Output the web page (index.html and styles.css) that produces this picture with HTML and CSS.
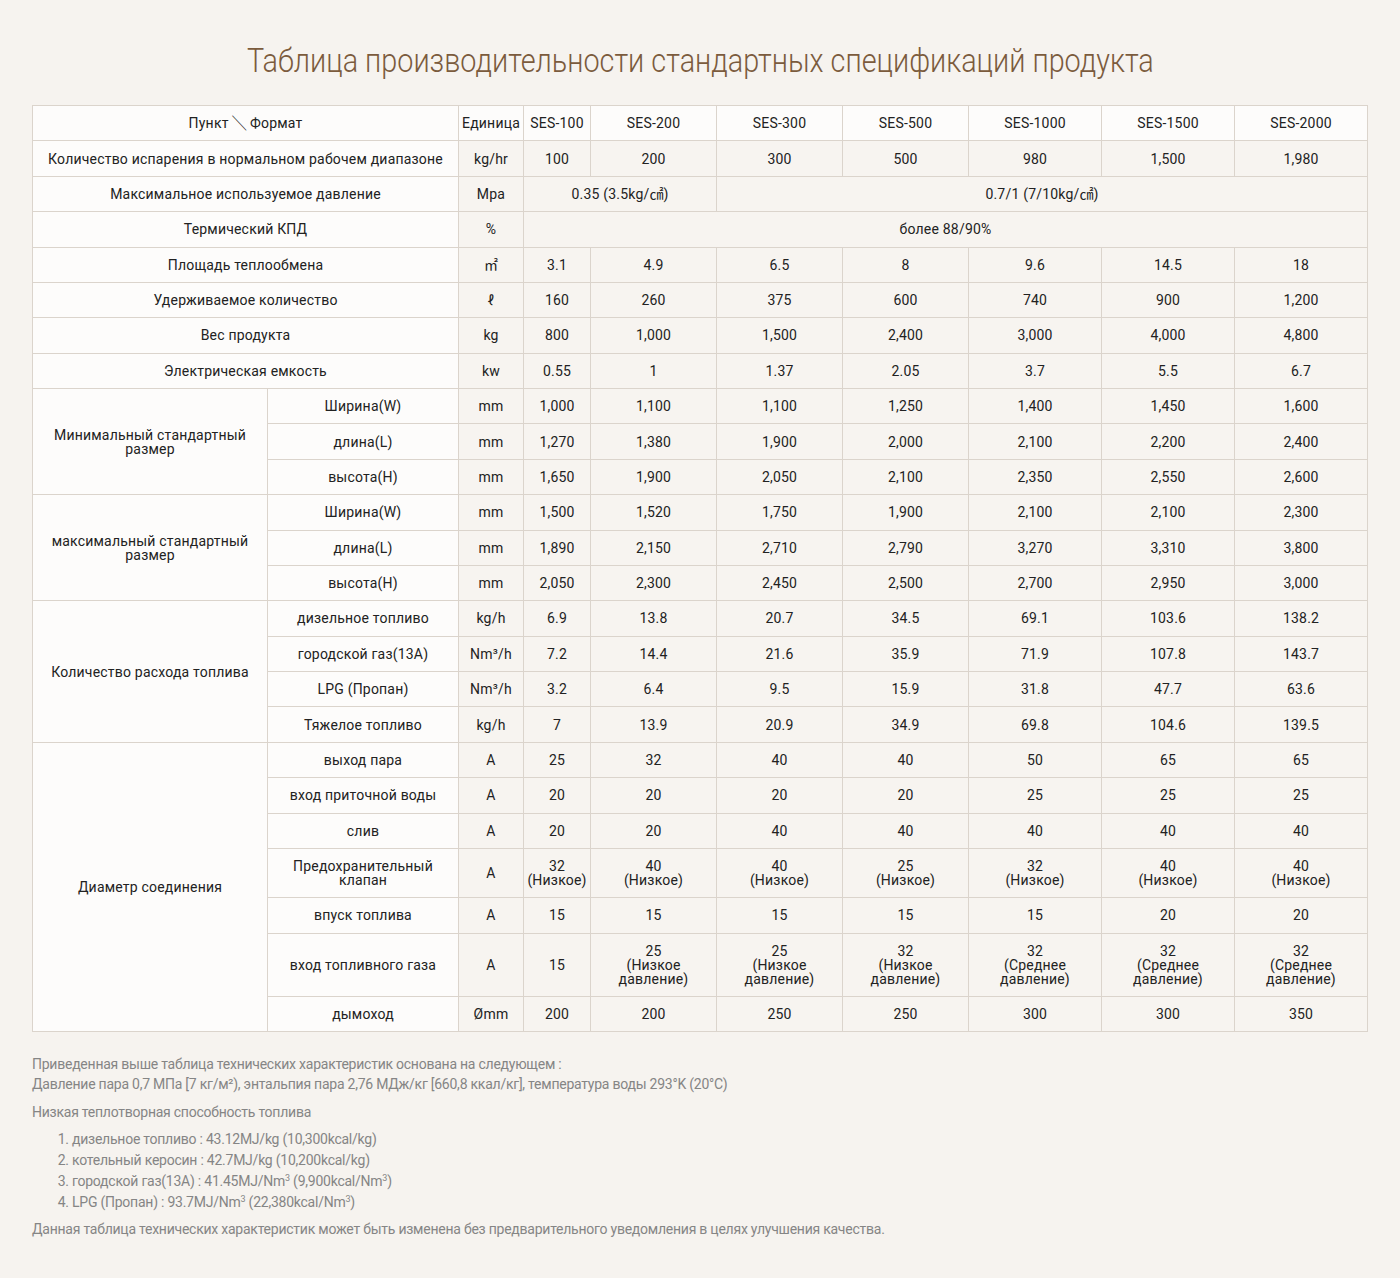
FILE: index.html
```html
<!DOCTYPE html>
<html lang="ru">
<head>
<meta charset="utf-8">
<title>Таблица производительности</title>
<link rel="stylesheet" href="styles.css">
</head>
<body>
<div class="page">
  <h1 class="title"><span class="title-text">Таблица производительности стандартных спецификаций продукта</span></h1>
  <table class="spec">
    <colgroup>
      <col class="c-grp"><col class="c-sub"><col class="c-unit"><col class="c-s1">
      <col class="c-m"><col class="c-m"><col class="c-m"><col class="c-l"><col class="c-l"><col class="c-l">
    </colgroup>
    <thead>
      <tr class="head">
        <th colspan="2">Пункт <span class="sym">╲</span> Формат</th><th>Единица</th><th>SES-100</th><th>SES-200</th><th>SES-300</th><th>SES-500</th><th>SES-1000</th><th>SES-1500</th><th>SES-2000</th>
      </tr>
    </thead>
    <tbody>
      <tr><td class="lbl" colspan="2">Количество испарения в нормальном рабочем диапазоне</td><td>kg/hr</td><td>100</td><td>200</td><td>300</td><td>500</td><td>980</td><td>1,500</td><td>1,980</td></tr>
      <tr><td class="lbl" colspan="2">Максимальное используемое давление</td><td>Mpa</td><td colspan="2">0.35 (3.5kg/<span class="sym">㎠</span>)</td><td colspan="5">0.7/1 (7/10kg/<span class="sym">㎠</span>)</td></tr>
      <tr><td class="lbl" colspan="2">Термический КПД</td><td>%</td><td colspan="7">более 88/90%</td></tr>
      <tr><td class="lbl" colspan="2">Площадь теплообмена</td><td><span class="sym">㎡</span></td><td>3.1</td><td>4.9</td><td>6.5</td><td>8</td><td>9.6</td><td>14.5</td><td>18</td></tr>
      <tr><td class="lbl" colspan="2">Удерживаемое количество</td><td>ℓ</td><td>160</td><td>260</td><td>375</td><td>600</td><td>740</td><td>900</td><td>1,200</td></tr>
      <tr><td class="lbl" colspan="2">Вес продукта</td><td>kg</td><td>800</td><td>1,000</td><td>1,500</td><td>2,400</td><td>3,000</td><td>4,000</td><td>4,800</td></tr>
      <tr><td class="lbl" colspan="2">Электрическая емкость</td><td>kw</td><td>0.55</td><td>1</td><td>1.37</td><td>2.05</td><td>3.7</td><td>5.5</td><td>6.7</td></tr>

      <tr><td class="lbl" rowspan="3">Минимальный стандартный<br>размер</td><td class="lbl">Ширина(W)</td><td>mm</td><td>1,000</td><td>1,100</td><td>1,100</td><td>1,250</td><td>1,400</td><td>1,450</td><td>1,600</td></tr>
      <tr><td class="lbl">длина(L)</td><td>mm</td><td>1,270</td><td>1,380</td><td>1,900</td><td>2,000</td><td>2,100</td><td>2,200</td><td>2,400</td></tr>
      <tr><td class="lbl">высота(H)</td><td>mm</td><td>1,650</td><td>1,900</td><td>2,050</td><td>2,100</td><td>2,350</td><td>2,550</td><td>2,600</td></tr>

      <tr><td class="lbl" rowspan="3">максимальный стандартный<br>размер</td><td class="lbl">Ширина(W)</td><td>mm</td><td>1,500</td><td>1,520</td><td>1,750</td><td>1,900</td><td>2,100</td><td>2,100</td><td>2,300</td></tr>
      <tr><td class="lbl">длина(L)</td><td>mm</td><td>1,890</td><td>2,150</td><td>2,710</td><td>2,790</td><td>3,270</td><td>3,310</td><td>3,800</td></tr>
      <tr><td class="lbl">высота(H)</td><td>mm</td><td>2,050</td><td>2,300</td><td>2,450</td><td>2,500</td><td>2,700</td><td>2,950</td><td>3,000</td></tr>

      <tr><td class="lbl" rowspan="4">Количество расхода топлива</td><td class="lbl">дизельное топливо</td><td>kg/h</td><td>6.9</td><td>13.8</td><td>20.7</td><td>34.5</td><td>69.1</td><td>103.6</td><td>138.2</td></tr>
      <tr><td class="lbl">городской газ(13A)</td><td>Nm³/h</td><td>7.2</td><td>14.4</td><td>21.6</td><td>35.9</td><td>71.9</td><td>107.8</td><td>143.7</td></tr>
      <tr><td class="lbl">LPG (Пропан)</td><td>Nm³/h</td><td>3.2</td><td>6.4</td><td>9.5</td><td>15.9</td><td>31.8</td><td>47.7</td><td>63.6</td></tr>
      <tr><td class="lbl">Тяжелое топливо</td><td>kg/h</td><td>7</td><td>13.9</td><td>20.9</td><td>34.9</td><td>69.8</td><td>104.6</td><td>139.5</td></tr>

      <tr><td class="lbl" rowspan="7">Диаметр соединения</td><td class="lbl">выход пара</td><td>A</td><td>25</td><td>32</td><td>40</td><td>40</td><td>50</td><td>65</td><td>65</td></tr>
      <tr><td class="lbl">вход приточной воды</td><td>A</td><td>20</td><td>20</td><td>20</td><td>20</td><td>25</td><td>25</td><td>25</td></tr>
      <tr><td class="lbl">слив</td><td>A</td><td>20</td><td>20</td><td>40</td><td>40</td><td>40</td><td>40</td><td>40</td></tr>
      <tr><td class="lbl">Предохранительный<br>клапан</td><td>A</td><td>32<br>(Низкое)</td><td>40<br>(Низкое)</td><td>40<br>(Низкое)</td><td>25<br>(Низкое)</td><td>32<br>(Низкое)</td><td>40<br>(Низкое)</td><td>40<br>(Низкое)</td></tr>
      <tr><td class="lbl">впуск топлива</td><td>A</td><td>15</td><td>15</td><td>15</td><td>15</td><td>15</td><td>20</td><td>20</td></tr>
      <tr><td class="lbl">вход топливного газа</td><td>A</td><td>15</td><td>25<br>(Низкое<br>давление)</td><td>25<br>(Низкое<br>давление)</td><td>32<br>(Низкое<br>давление)</td><td>32<br>(Среднее<br>давление)</td><td>32<br>(Среднее<br>давление)</td><td>32<br>(Среднее<br>давление)</td></tr>
      <tr><td class="lbl">дымоход</td><td>Ømm</td><td>200</td><td>200</td><td>250</td><td>250</td><td>300</td><td>300</td><td>350</td></tr>
    </tbody>
  </table>

  <div class="notes">
    <p>Приведенная выше таблица технических характеристик основана на следующем :<br>Давление пара 0,7 МПа [7 кг/м²), энтальпия пара 2,76 МДж/кг [660,8 ккал/кг], температура воды 293°K (20°C)</p>
    <p>Низкая теплотворная способность топлива</p>
    <ol>
      <li>дизельное топливо : 43.12MJ/kg (10,300kcal/kg)</li>
      <li>котельный керосин : 42.7MJ/kg (10,200kcal/kg)</li>
      <li>городской газ(13A) : 41.45MJ/Nm<sup>3</sup> (9,900kcal/Nm<sup>3</sup>)</li>
      <li>LPG (Пропан) : 93.7MJ/Nm<sup>3</sup> (22,380kcal/Nm<sup>3</sup>)</li>
    </ol>
    <p>Данная таблица технических характеристик может быть изменена без предварительного уведомления в целях улучшения качества.</p>
  </div>
</div>
</body>
</html>
```

FILE: styles.css
```css
html, body {
  margin: 0;
  padding: 0;
  background: #f6f3ef;
}
body {
  font-family: Roboto, "Noto Sans", "DejaVu Sans", sans-serif;
  color: #222;
}
.page {
  padding: 38px 32px 40px 32px;
}
.title {
  margin: 0 0 23px 0;
  text-align: center;
  font-size: 34px;
  font-weight: 300;
  line-height: 44px;
  color: #7b5b3d;
}
.title-text {
  display: inline-block;
  transform: scaleX(0.847);
  white-space: nowrap;
}
.spec {
  width: 1336px;
  border-collapse: collapse;
  table-layout: fixed;
  font-size: 14px;
  line-height: 14px;
  letter-spacing: 0.2px;
}
.c-grp { width: 235px; }
.c-sub { width: 191px; }
.c-unit { width: 65px; }
.c-s1 { width: 67px; }
.c-m { width: 126px; }
.c-l { width: 133px; }
.spec th, .spec td {
  border: 1px solid #dbd4cc;
  padding: 10.2px 1px;
  text-align: center;
  vertical-align: middle;
  background: #f7f4f0;
  font-weight: 400;
}
.spec th {
  background: #fdfcfb;
}
.spec td.lbl {
  background: #fdfcfb;
}
.sym {
  font-family: "Noto Sans CJK KR", "Noto Sans CJK JP", "DejaVu Sans", sans-serif;
  font-size: 14px;
  line-height: 0;
  letter-spacing: 0;
}
.notes {
  margin-top: 22px;
  font-size: 14px;
  line-height: 20px;
  color: #858585;
  letter-spacing: -0.24px;
}
.notes p {
  margin: 0 0 8px 0;
}
.notes ol {
  margin: -1px 0 6px 0;
  padding-left: 40px;
  line-height: 21px;
}
.notes sup {
  font-size: 9px;
  line-height: 0;
  vertical-align: 5px;
}
```
